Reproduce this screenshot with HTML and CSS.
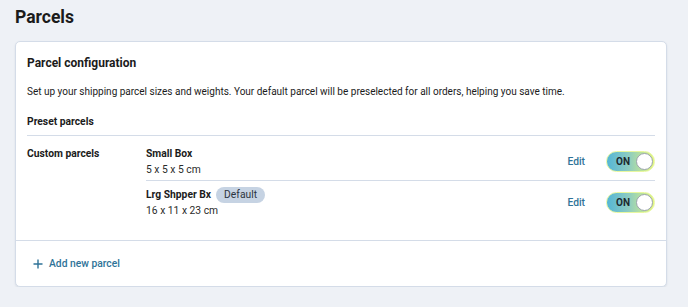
FILE: index.html
```html
<!DOCTYPE html>
<html lang="en">
<head>
    <meta charset="UTF-8">
    <meta name="viewport" content="width=device-width, initial-scale=1.0">
    <title>Parcels</title>
    <link rel="stylesheet" href="styles.css">
</head>
<body>
    <div class="page">
        <h1 class="page-title">Parcels</h1>
        <section class="card">
            <div class="card-body">
                <h2 class="card-title">Parcel configuration</h2>
                <p class="card-desc">Set up your shipping parcel sizes and weights. Your default parcel will be preselected for all orders, helping you save time.</p>
                <h3 class="section-title">Preset parcels</h3>
                <div class="custom-row">
                    <div class="custom-label">Custom parcels</div>
                    <ul class="parcel-list">
                        <li class="parcel">
                            <div class="parcel-info">
                                <div class="parcel-name">Small Box</div>
                                <div class="parcel-size">5 x 5 x 5 cm</div>
                            </div>
                            <a class="edit-link" href="#">Edit</a>
                            <span class="toggle"><span class="toggle-text">ON</span><span class="knob"></span></span>
                        </li>
                        <li class="parcel">
                            <div class="parcel-info">
                                <div class="parcel-name">Lrg Shpper Bx <span class="badge">Default</span></div>
                                <div class="parcel-size">16 x 11 x 23 cm</div>
                            </div>
                            <a class="edit-link" href="#">Edit</a>
                            <span class="toggle"><span class="toggle-text">ON</span><span class="knob"></span></span>
                        </li>
                    </ul>
                </div>
            </div>
            <div class="card-foot">
                <a class="add-link" href="#">
                    <svg width="10" height="10" viewBox="0 0 10 10"><path d="M5 0.5v9M0.5 5h9" stroke="currentColor" stroke-width="1.4" fill="none"/></svg>
                    Add new parcel
                </a>
            </div>
        </section>
    </div>
</body>
</html>
```

FILE: styles.css
```css
body {
    margin: 0;
    background-color: #eef1f6;
    font-family: Roboto, "Open Sans", sans-serif;
    color: #1b1b1b;
}

.page {
    padding: 5px 21px 0 15px;
}

.page-title {
    margin: 0;
    font-size: 17.5px;
    line-height: 24px;
    font-weight: 700;
}

/* card */
.card {
    margin-top: 12px;
    background: #fff;
    border: 1px solid #d4dce8;
    border-radius: 5px;
    box-shadow: 0 1px 2px rgba(60, 80, 110, 0.12);
}

.card-body {
    padding: 12px 11px 19px;
}

.card-title {
    margin: 0;
    font-size: 12px;
    line-height: 18px;
    font-weight: 700;
}

.card-desc {
    margin: 12px 0 0;
    font-size: 10px;
    line-height: 16px;
}

.section-title {
    margin: 14px 0 0;
    font-size: 10.3px;
    line-height: 16px;
    font-weight: 700;
    padding-bottom: 5px;
    border-bottom: 1px solid #d4dce8;
}

.custom-row {
    display: grid;
    grid-template-columns: 119px 1fr;
}

.custom-label {
    font-size: 10.3px;
    font-weight: 700;
    line-height: 16px;
    padding-top: 10px;
}

.parcel-list {
    margin: 0;
    padding: 0;
    list-style: none;
}

.parcel {
    display: flex;
    align-items: center;
    padding: 10px 0 3px;
}

.parcel + .parcel {
    border-top: 1px solid #d4dce8;
    padding-top: 6px;
}

.parcel-info {
    flex: 1;
}

.parcel-name {
    font-size: 10.3px;
    font-weight: 700;
    line-height: 16px;
    display: flex;
    align-items: center;
    gap: 5px;
}

.parcel-size {
    font-size: 10.3px;
    line-height: 15px;
    color: #2b2b2b;
}

.badge {
    font-weight: 400;
    font-size: 10.3px;
    line-height: 16px;
    padding: 0 8px;
    border-radius: 8px;
    background: #c6d3e3;
    color: #2c3440;
}

.edit-link {
    font-size: 10.3px;
    font-weight: 500;
    color: #2f7398;
    text-decoration: none;
    margin-right: 21px;
}

.toggle {
    display: flex;
    align-items: center;
    justify-content: space-between;
    width: 49px;
    height: 21px;
    padding: 0 1px 0 9px;
    box-sizing: border-box;
    border-radius: 11px;
    background: linear-gradient(90deg, #54b6d6 0%, #8ccbc2 45%, #e2f77a 100%);
    border: 1px solid #e8f7a0;
}

.toggle-text {
    font-size: 10px;
    font-weight: 700;
    color: #1e2a30;
}

.knob {
    width: 17px;
    height: 17px;
    border-radius: 50%;
    background: #fff;
    border: 1px solid #9aa3ad;
    box-sizing: border-box;
}

.card-foot {
    border-top: 1px solid #d4dce8;
    padding: 13px 17px 13px;
}

.add-link {
    display: inline-flex;
    align-items: center;
    gap: 6px;
    font-size: 10.3px;
    font-weight: 500;
    color: #2f7398;
    text-decoration: none;
    line-height: 16px;
}
```
